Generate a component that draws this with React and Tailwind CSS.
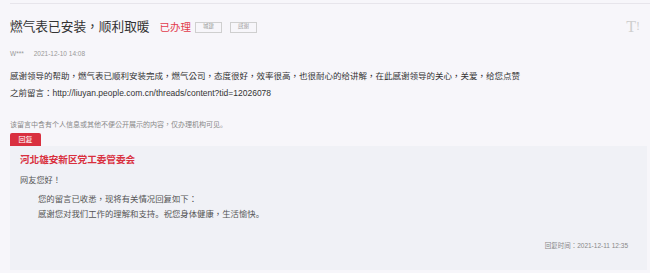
export default function App() {
  const sc = "font-['Liberation_Sans','Noto_Sans_CJK_SC',sans-serif]";
  return (
    <div className="w-[650px] h-[273px] bg-[#f7f6fa] overflow-hidden font-['Liberation_Sans','Noto_Sans_CJK_TC',sans-serif]">
      <div className="ml-[10px] pt-[3px]">
        <div className="h-px bg-[#e7e5eb]" />
        <div className="mt-[14px] h-[18px] flex items-center">
          <span className="text-[12.7px] leading-none text-[#333]">燃气表已安装，顺利取暖</span>
          <span className="ml-[10px] text-[10.5px] leading-none text-[#e23c4c]">已办理</span>
          <span className="ml-[4px] w-[27px] h-[11px] border border-[#cfcfcf] flex items-center justify-center text-[5.5px] leading-none text-[#999]">城建</span>
          <span className="ml-[8px] w-[27px] h-[11px] border border-[#cfcfcf] flex items-center justify-center text-[5.5px] leading-none text-[#999]">感谢</span>
          <span className="ml-auto mr-[10px] font-['Liberation_Serif',serif] text-[16px] leading-none text-[#cfcfcf] flex items-start">
            <span>T</span><span className="text-[12px] mt-[1px]">!</span>
          </span>
        </div>
        <div className="mt-[13px] h-[10px] flex items-center text-[6.5px] leading-none text-[#999]">
          <span>W***</span>
          <span className="ml-[10px]">2021-12-10 14:08</span>
        </div>
        <div className="mt-[8.5px] text-[8.5px] leading-[17px] text-[#333]">
          <div>感谢领导的帮助，燃气表已顺利安装完成，燃气公司，态度很好，效率很高，也很耐心的给讲解，在此感谢领导的关心，关爱，给您点赞</div>
          <div>之前留言：http://liuyan.people.com.cn/threads/content?tid=12026078</div>
        </div>
        <div className="mt-[17.5px] h-[10px] flex items-center text-[7px] leading-none text-[#888]">
          该留言中含有个人信息或其他不便公开展示的内容，仅办理机构可见<span className={sc}>。</span>
        </div>
        <div className="mt-[4px] w-[31px] h-[13px] bg-[#d9303f] rounded-t-[2px] flex items-center justify-center text-[7px] leading-none text-white">
          回复
        </div>
        <div className="mr-[3px] h-[124px] bg-[#f0f1f6] pl-[10px] pr-[19px] pt-[7px]">
          <div className="h-[14px] flex items-center text-[9.6px] font-bold leading-none text-[#d9303f]">河北雄安新区党工委管委会</div>
          <div className="mt-[8px] h-[12px] flex items-center text-[8.2px] leading-none text-[#555]">网友您好！</div>
          <div className="mt-[4.5px] pl-[18px] text-[8.4px] leading-[15px] text-[#555]">
            <div>您的留言已收悉，现将有关情况回复如下：</div>
            <div>感谢您对我们工作的理解和支持<span className={sc}>。</span>祝您身体健康，生活愉快<span className={sc}>。</span></div>
          </div>
          <div className="mt-[20px] h-[10px] flex items-center justify-end text-[6.5px] leading-none text-[#888]">回复时间：2021-12-11 12:35</div>
        </div>
      </div>
    </div>
  );
}
